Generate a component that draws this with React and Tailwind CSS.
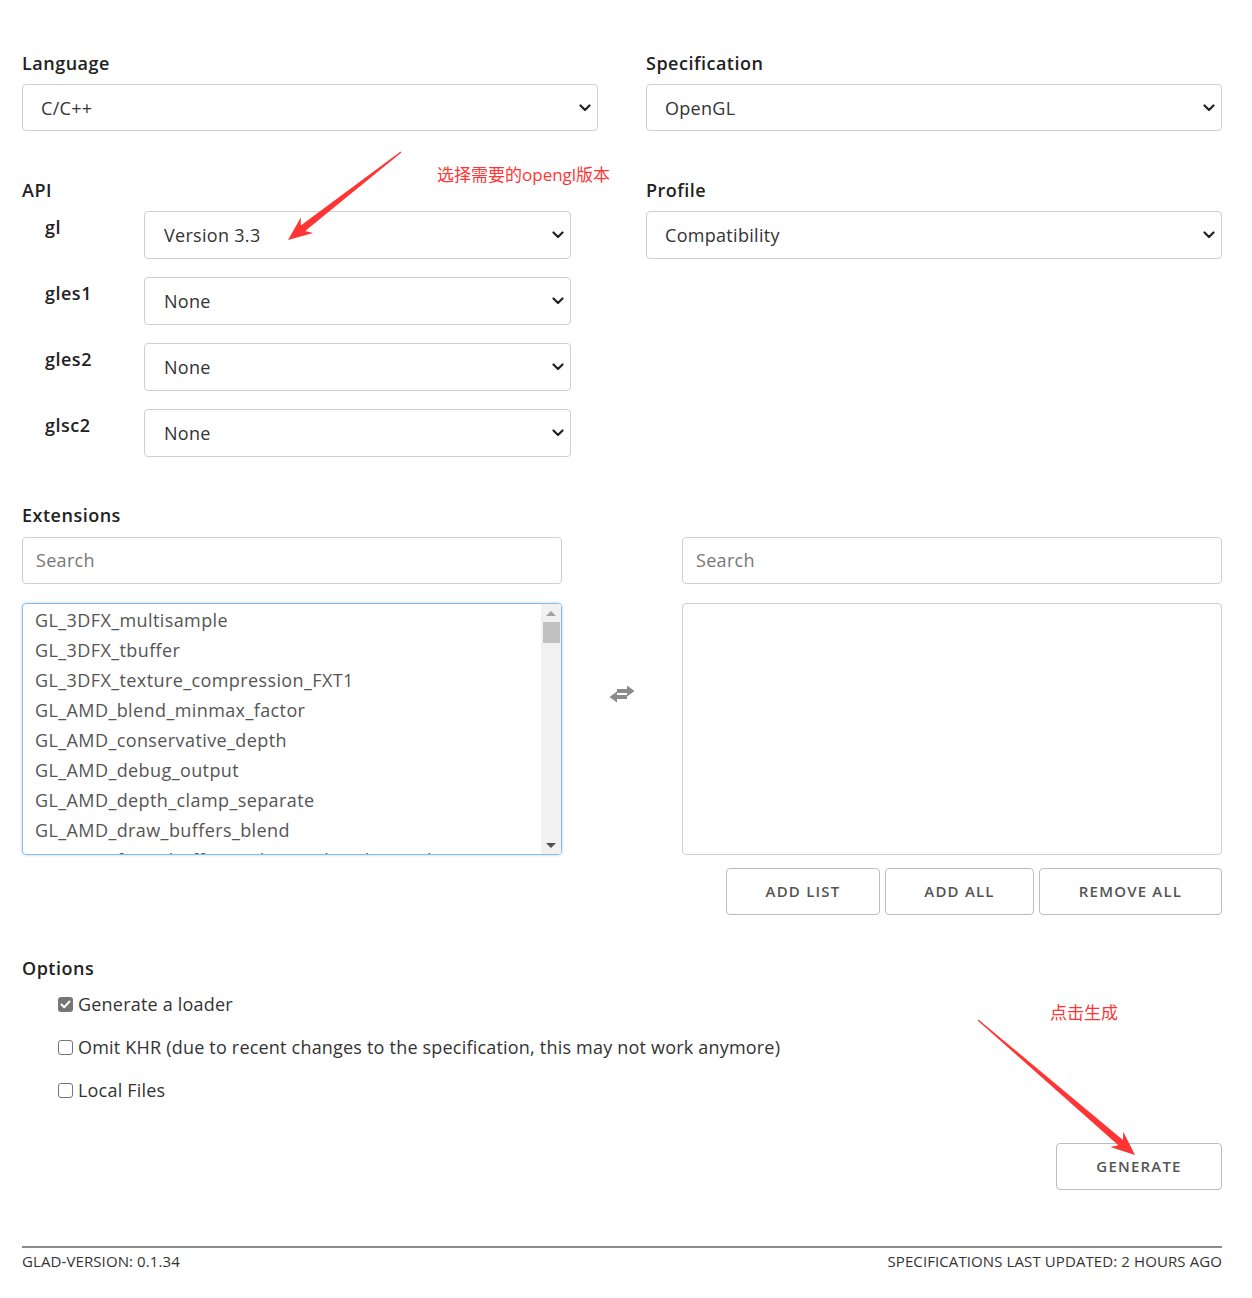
const API_ROWS = [
  { name: 'gl', value: 'Version 3.3' },
  { name: 'gles1', value: 'None' },
  { name: 'gles2', value: 'None' },
  { name: 'glsc2', value: 'None' },
];

const EXTENSIONS = [
  'GL_3DFX_multisample',
  'GL_3DFX_tbuffer',
  'GL_3DFX_texture_compression_FXT1',
  'GL_AMD_blend_minmax_factor',
  'GL_AMD_conservative_depth',
  'GL_AMD_debug_output',
  'GL_AMD_depth_clamp_separate',
  'GL_AMD_draw_buffers_blend',
  'GL_AMD_framebuffer_multisample_advanced',
];

const OPTIONS = [
  { label: 'Generate a loader', checked: true },
  { label: 'Omit KHR (due to recent changes to the specification, this may not work anymore)', checked: false },
  { label: 'Local Files', checked: false },
];

function Chevron() {
  return (
    <svg width="12" height="8" viewBox="0 0 12 8" className="shrink-0">
      <path d="M1.5 1.5 L6 6 L10.5 1.5" fill="none" stroke="#222" strokeWidth="2.2" strokeLinecap="round" strokeLinejoin="round" />
    </svg>
  );
}

function Select({ value, className = '' }) {
  return (
    <div className={`flex items-center justify-between rounded-[4px] border border-[#cfcfcf] bg-white pl-[18px] pr-[6px] text-[18px] tracking-[0.3px] text-[#333] ${className}`}>
      <span className="pt-[1px]">{value}</span>
      <Chevron />
    </div>
  );
}

function Label({ children, className = '' }) {
  return <div className={`text-[18px] font-semibold leading-6 tracking-[0.5px] text-[#222] ${className}`}>{children}</div>;
}

function SwapIcon() {
  return (
    <svg width="28" height="20" viewBox="0 0 28 20">
      <path d="M9 5 H19 V1.5 L26.5 7 L19 12.5 V9 H9 Z" fill="#8a8a8a" />
      <path d="M19 11 H9 V7.5 L1.5 13 L9 18.5 V15 H19 Z" fill="#8a8a8a" />
    </svg>
  );
}

function Checkbox({ checked }) {
  if (checked) {
    return (
      <span className="flex h-[15px] w-[15px] shrink-0 items-center justify-center rounded-[3px] bg-[#767676]">
        <svg width="11" height="9" viewBox="0 0 11 9">
          <path d="M1.5 4.5 L4.2 7.2 L9.5 1.5" fill="none" stroke="#fff" strokeWidth="2" strokeLinecap="round" strokeLinejoin="round" />
        </svg>
      </span>
    );
  }
  return <span className="h-[15px] w-[15px] shrink-0 rounded-[3px] border border-[#767676] bg-white" />;
}

function Button({ children, className = '' }) {
  return (
    <button className={`h-[47px] rounded-[4px] border border-[#bdbdbd] bg-white text-[15px] font-semibold uppercase tracking-[1.2px] text-[#555] ${className}`}>
      {children}
    </button>
  );
}

function Annotations() {
  return (
    <>
      <svg className="pointer-events-none absolute left-0 top-0" width="1252" height="1298" viewBox="0 0 1252 1298">
        <polygon fill="#ff3535" points="400.6,151.5 401.4,152.5 305.2,231.1 313.1,233.1 288,240 300.8,217.4 300.8,225.5" />
        <polygon fill="#ff3535" points="977.6,1020.5 1118.3,1145.3 1110.3,1146.9 1135,1155 1123.3,1131.8 1122.9,1139.9 978.4,1019.5" />
      </svg>
      <div className="absolute left-[437px] top-[164px] font-['Open_Sans','Noto_Sans_CJK_SC',sans-serif] text-[17px] leading-[22px] text-[#ff3535]">选择需要的opengl版本</div>
      <div className="absolute left-[1050px] top-[1001px] font-['Noto_Sans_CJK_SC',sans-serif] text-[17px] leading-[22px] text-[#ff3535]">点击生成</div>
    </>
  );
}

export default function App() {
  return (
    <div className="relative min-h-[1298px] bg-white font-['Open_Sans','Noto_Sans_CJK_SC',sans-serif] text-[#333]">
      <div className="ml-[22px] w-[1200px] pt-[51px]">
        <div className="grid grid-cols-2 gap-x-[48px]">
          <div>
            <Label>Language</Label>
            <Select value="C/C++" className="mt-[9px] h-[47px]" />
          </div>
          <div>
            <Label>Specification</Label>
            <Select value="OpenGL" className="mt-[9px] h-[47px]" />
          </div>

          <div className="mt-[47px]">
            <Label>API</Label>
            <div className="mt-[9px] flex flex-col gap-[18px]">
              {API_ROWS.map((row) => (
                <div key={row.name} className="flex">
                  <div className="w-[122px] pl-[23px] pt-[4px] text-[18px] font-semibold leading-6 tracking-[0.5px] text-[#222]">{row.name}</div>
                  <Select value={row.value} className="h-[48px] w-[427px] pl-[19px]" />
                </div>
              ))}
            </div>
          </div>
          <div className="mt-[47px]">
            <Label>Profile</Label>
            <Select value="Compatibility" className="mt-[9px] h-[48px]" />
          </div>
        </div>

        <Label className="mt-[46px]">Extensions</Label>
        <div className="mt-[10px] grid grid-cols-[540px_120px_540px] items-start">
          <div className="flex h-[47px] items-center rounded-[4px] border border-[#cfcfcf] pl-[13px] text-[18px] tracking-[0.3px] text-[#777]">Search</div>
          <div />
          <div className="flex h-[47px] items-center rounded-[4px] border border-[#cfcfcf] pl-[13px] text-[18px] tracking-[0.3px] text-[#777]">Search</div>

          <div className="mt-[19px] flex h-[252px] overflow-hidden rounded-[4px] border border-[#8cbbe6] shadow-[0_0_3px_rgba(100,160,220,0.5)]">
            <div className="flex-1 overflow-hidden pl-[12px] pt-[1px]">
              {EXTENSIONS.map((ext) => (
                <div key={ext} className="h-[30px] whitespace-nowrap text-[18px] leading-[30px] tracking-[0.4px] text-[#555]">{ext}</div>
              ))}
            </div>
            <div className="flex w-[20px] flex-col items-center bg-[#f1f1f1]">
              <div className="flex h-[18px] w-full items-center justify-center">
                <span className="h-0 w-0 border-x-[5px] border-b-[5px] border-x-transparent border-b-[#a3a3a3]" />
              </div>
              <div className="h-[21px] w-[17px] bg-[#c1c1c1]" />
              <div className="flex-1" />
              <div className="flex h-[18px] w-full items-center justify-center">
                <span className="h-0 w-0 border-x-[5px] border-t-[5px] border-x-transparent border-t-[#505050]" />
              </div>
            </div>
          </div>
          <div className="mt-[19px] flex h-[252px] items-center justify-center pb-[70px]">
            <SwapIcon />
          </div>
          <div className="mt-[19px] flex flex-col">
            <div className="h-[252px] rounded-[4px] border border-[#cfcfcf]" />
            <div className="mt-[13px] flex justify-end gap-[5px]">
              <Button className="w-[154px]">Add list</Button>
              <Button className="w-[149px]">Add all</Button>
              <Button className="w-[183px]">Remove all</Button>
            </div>
          </div>
        </div>

        <Label className="mt-[41px]">Options</Label>
        <div className="mt-[12px] flex flex-col gap-[19px] pl-[36px]">
          {OPTIONS.map((opt) => (
            <label key={opt.label} className="flex h-[24px] items-center gap-[5px] text-[18px] tracking-[0.2px] text-[#333]">
              <Checkbox checked={opt.checked} />
              <span>{opt.label}</span>
            </label>
          ))}
        </div>

        <div className="mt-[41px] flex justify-end">
          <Button className="w-[166px]">Generate</Button>
        </div>

        <div className="mt-[56px] border-t-2 border-[#8a8a8a]" />
        <div className="flex justify-between pt-[2px] text-[15px] uppercase leading-[22px] tracking-[0.1px] text-[#333]">
          <span>GLAD-Version: 0.1.34</span>
          <span>Specifications last updated: 2 hours ago</span>
        </div>
      </div>
      <Annotations />
    </div>
  );
}
